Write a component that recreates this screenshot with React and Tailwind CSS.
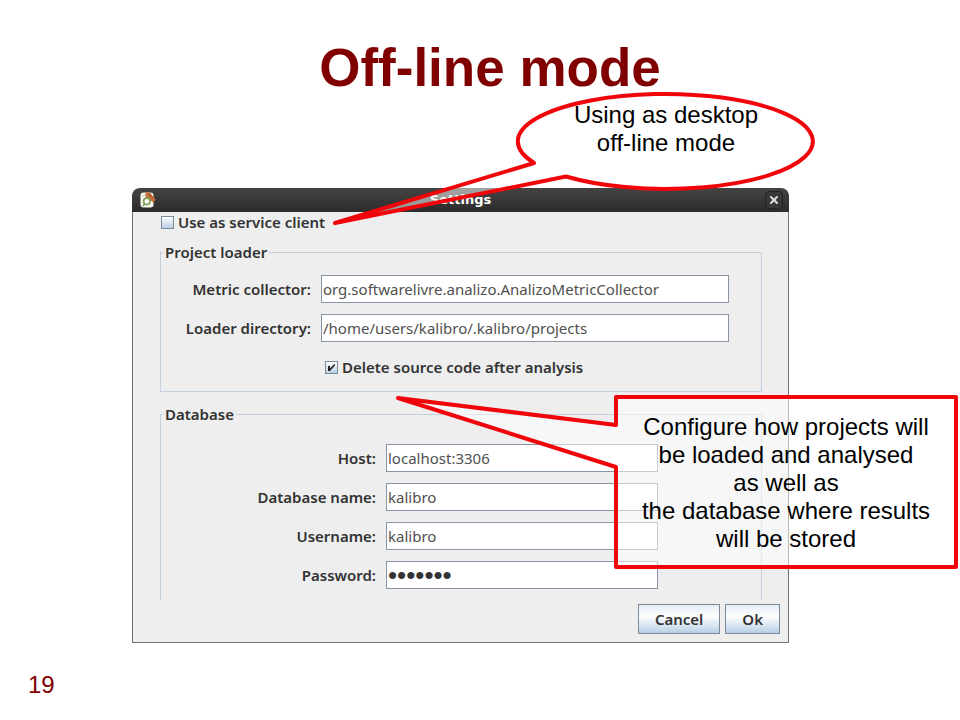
import { X } from 'lucide-react';

const loaderFields = [
    { id: 'collector', label: 'Metric collector:', value: 'org.softwarelivre.analizo.AnalizoMetricCollector' },
    { id: 'directory', label: 'Loader directory:', value: '/home/users/kalibro/.kalibro/projects' },
];

const databaseFields = [
    { id: 'host', label: 'Host:', value: 'localhost:3306' },
    { id: 'database', label: 'Database name:', value: 'kalibro' },
    { id: 'username', label: 'Username:', value: 'kalibro' },
    { id: 'password', label: 'Password:', value: 'kalibro', type: 'password' },
];

const Checkbox = ({ id, label, checked }) => (
    <div className="flex items-center gap-1 h-5">
        <span className="relative flex">
            <input
                id={id}
                type="checkbox"
                defaultChecked={checked}
                className="peer appearance-none size-[13px] border border-[#7a8a99] bg-linear-to-b from-white to-[#b8cfe5]"
            />
            <svg viewBox="0 0 13 13" className="hidden peer-checked:block absolute inset-0 size-[13px] pointer-events-none">
                <path d="M3 5h2v2.4L9.8 2.6v2.2L5 10H3z" fill="#222" />
            </svg>
        </span>
        <label htmlFor={id} className="font-semibold">{label}</label>
    </div>
);

const Field = ({ id, label, value, type = 'text', labelWidth }) => (
    <div className="flex items-center gap-2.5">
        <label htmlFor={id} className={`${labelWidth} shrink-0 text-right font-semibold`}>{label}</label>
        <input
            id={id}
            type={type}
            defaultValue={value}
            className={`flex-1 w-0 min-w-0 h-7 px-px bg-white border border-[#8795a5] outline-none ${type === 'password' ? "text-[26px] leading-none text-[#333] font-['Liberation_Sans',sans-serif]" : 'text-[#505050]'}`}
        />
    </div>
);

const DialogButton = ({ children }) => (
    <button type="button" className="h-[30px] px-4 border border-[#7a8a99] bg-linear-to-b from-[#e3ecf5] via-white via-40% to-[#b8cfe5] font-semibold">
        {children}
    </button>
);

const AppIcon = () => (
    <svg viewBox="0 0 16 16" className="size-4">
        <rect x="0.5" y="0.5" width="13" height="15" rx="3" fill="#f6f5ec" />
        <path d="M5.5 0.5H10l5.5 7-2 3-3-2L5.5 5z" fill="#c8713a" />
        <path d="M9 2l4 5" stroke="#a0552a" strokeWidth="1.2" />
        <circle cx="6.8" cy="9.3" r="3.2" fill="#fff" stroke="#7ea052" strokeWidth="1.6" />
        <path d="M3 14l1.8-2.2" stroke="#7ea052" strokeWidth="1.6" />
        <path d="M2 5l2.5-2.5" stroke="#c5d0a0" strokeWidth="1" />
    </svg>
);

const SettingsDialog = () => (
    <div className="text-[15px] text-[#333] font-['Noto_Sans',sans-serif]">
        <div className="relative flex items-center justify-between h-6 pl-2 pr-1.5 rounded-t-lg bg-linear-to-b from-[#444] to-[#2c2c2c]">
            <AppIcon />
            <h2 className="absolute inset-x-0 text-center text-white font-bold text-[13px] font-['DejaVu_Sans',sans-serif]">Settings</h2>
            <button type="button" aria-label="Close" className="relative flex items-center justify-center size-[18px] rounded-sm border border-[#222] bg-[#383838] text-[#ddd]">
                <X size={12} strokeWidth={4} />
            </button>
        </div>

        <form className="bg-[#eee] border border-t-0 border-[#77726a] pl-[27px] pr-2 pb-2">
            <div className="pl-px mb-2.5">
                <Checkbox id="service" label="Use as service client" />
            </div>

            <fieldset className="min-w-0 mr-[18px] border border-[#c3d1de] pr-8 pb-3.5">
                <legend className="ml-0.5 px-0.5 leading-5 font-semibold">Project loader</legend>
                <div className="flex flex-col gap-[11px] pt-[13px]">
                    {loaderFields.map((item) => (
                        <Field {...item} labelWidth="w-[150px]" key={item.id} />
                    ))}
                    <div className="pl-[164px] pt-1">
                        <Checkbox id="delete" label="Delete source code after analysis" checked />
                    </div>
                </div>
            </fieldset>

            <fieldset className="min-w-0 mt-3 mr-[18px] border border-b-0 border-[#c3d1de] pr-[103px] pb-[11px]">
                <legend className="ml-0.5 px-0.5 leading-5 font-semibold">Database</legend>
                <div className="flex flex-col gap-[11px] pt-5">
                    {databaseFields.map((item) => (
                        <Field {...item} labelWidth="w-[215px]" key={item.id} />
                    ))}
                </div>
            </fieldset>

            <div className="flex justify-end gap-[5px] pt-1">
                <DialogButton>Cancel</DialogButton>
                <DialogButton>Ok</DialogButton>
            </div>
        </form>
    </div>
);

// translucent shapes lying over the dialog
const OfflineCallout = () => (
    <div className="absolute left-[198px] -top-[98px] w-[490px] h-[140px] pointer-events-none">
        <svg viewBox="330 90 490 140" className="absolute inset-0 size-full">
            <path
                d="M534 163 A147.5 47.5 0 1 1 566 176.5 L335 223 Z"
                fill="#fff" fillOpacity="0.5" stroke="#f0060a" strokeWidth="4" strokeLinejoin="round"
            />
        </svg>
        <p className="relative pt-[11px] pl-[188px] pr-1.5 text-center text-2xl leading-7">
            Using as desktop<br />off-line mode
        </p>
    </div>
);

const ConfigureCallout = () => (
    <div className="absolute left-[262px] top-[204px] w-[566px] h-[180px] pointer-events-none">
        <svg viewBox="394 392 566 180" className="absolute inset-0 size-full">
            <path
                d="M616 397H956V567H616V467L398 398L616 425Z"
                fill="#fff" fillOpacity="0.5" stroke="#f0060a" strokeWidth="4" strokeLinejoin="round"
            />
        </svg>
        <p className="relative pt-[21px] pl-[222px] pr-1 text-center text-2xl leading-7">
            Configure how projects will<br />be loaded and analysed<br />as well as<br />the database where results<br />will be stored
        </p>
    </div>
);

const App = () => {
    return (
        <main className="min-h-screen bg-white text-black font-['Liberation_Sans',Arial,sans-serif]">
            <div className="max-w-[960px] mx-auto pt-[38px]">
                <h1 className="pl-5 text-center text-[53px] leading-[60px] font-bold text-[#800000]">Off-line mode</h1>

                <div className="relative mt-[90px] ml-[132px] mr-[171px]">
                    <SettingsDialog />
                    <OfflineCallout />
                    <ConfigureCallout />
                </div>

                <footer className="pt-7 pl-7 text-2xl leading-7 text-[#800000]">19</footer>
            </div>
        </main>
    );
};

export default App;
